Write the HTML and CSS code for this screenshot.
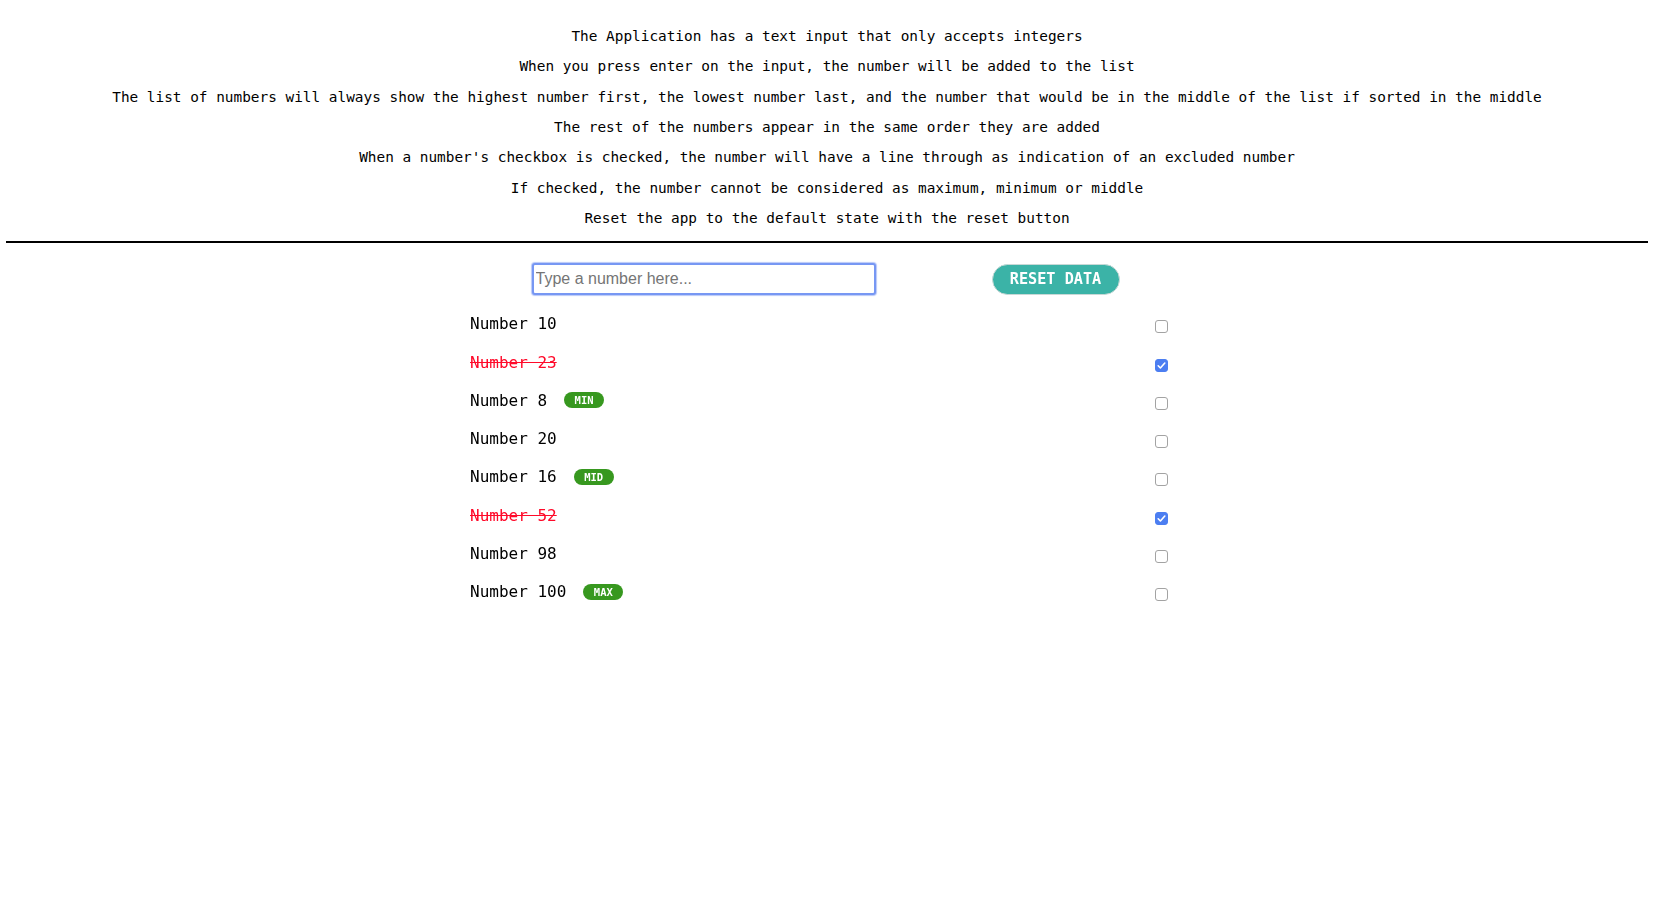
FILE: index.html
```html
<!DOCTYPE html>
<html lang="en">
<head>
<meta charset="utf-8">
<title>Numbers</title>
<link rel="stylesheet" href="styles.css">
</head>
<body>
<div class="intro">
  <p>The Application has a text input that only accepts integers</p>
  <p>When you press enter on the input, the number will be added to the list</p>
  <p>The list of numbers will always show the highest number first, the lowest number last, and the number that would be in the middle of the list if sorted in the middle</p>
  <p>The rest of the numbers appear in the same order they are added</p>
  <p>When a number's checkbox is checked, the number will have a line through as indication of an excluded number</p>
  <p>If checked, the number cannot be considered as maximum, minimum or middle</p>
  <p>Reset the app to the default state with the reset button</p>
</div>
<hr class="divider">
<div class="controls">
  <input class="num-input" type="text" placeholder="Type a number here..." autofocus>
  <button class="reset-btn" type="button">RESET DATA</button>
</div>
<ul class="list">
  <li class="row"><span class="label"><span class="num">Number 10</span></span><input class="check" type="checkbox"></li>
  <li class="row"><span class="label"><span class="num excluded">Number 23</span></span><input class="check" type="checkbox" checked></li>
  <li class="row"><span class="label"><span class="num">Number 8</span><span class="badge">MIN</span></span><input class="check" type="checkbox"></li>
  <li class="row"><span class="label"><span class="num">Number 20</span></span><input class="check" type="checkbox"></li>
  <li class="row"><span class="label"><span class="num">Number 16</span><span class="badge">MID</span></span><input class="check" type="checkbox"></li>
  <li class="row"><span class="label"><span class="num excluded">Number 52</span></span><input class="check" type="checkbox" checked></li>
  <li class="row"><span class="label"><span class="num">Number 98</span></span><input class="check" type="checkbox"></li>
  <li class="row"><span class="label"><span class="num">Number 100</span><span class="badge">MAX</span></span><input class="check" type="checkbox"></li>
</ul>
</body>
</html>
```
FILE: styles.css
```css
html, body {
  margin: 0;
  padding: 0;
  background: #fff;
}
body {
  font-family: "DejaVu Sans Mono", "Liberation Mono", monospace;
  color: #000;
}
.intro {
  padding-top: 20.8px;
}
.intro p {
  margin: 0;
  font-size: 14.4px;
  line-height: 30.4px;
  text-align: center;
}
.divider {
  margin: 7.4px 6px 0;
  border: 0;
  height: 2px;
  background: #000;
}
.controls {
  display: flex;
  justify-content: center;
  align-items: center;
  gap: 116px;
  margin-top: 20px;
  height: 32px;
}
.num-input {
  box-sizing: border-box;
  width: 344px;
  height: 32px;
  margin: 0 0 0 -3px;
  padding: 0 2px;
  border: 2px solid #7797f3;
  border-radius: 3px;
  box-shadow: 0 0 1px 1px #b8c8f8;
  font-family: "Liberation Sans", Arial, sans-serif;
  font-size: 16px;
  color: #000;
  outline: none;
  caret-color: #000;
}
.num-input::placeholder {
  color: #757575;
}
.reset-btn {
  box-sizing: border-box;
  width: 128px;
  height: 31px;
  padding: 0;
  border: 1px solid #c8d8d6;
  border-radius: 16px;
  background: #3bb3a7;
  color: #fff;
  font-family: "DejaVu Sans Mono", monospace;
  font-weight: bold;
  font-size: 15.2px;
  cursor: pointer;
}
.list {
  list-style: none;
  margin: 9.7px auto 0;
  padding: 0;
  width: 714px;
}
.row {
  display: flex;
  justify-content: space-between;
  align-items: center;
  height: 38.28px;
}
.label {
  display: flex;
  align-items: center;
  gap: 17px;
  font-size: 16px;
}
.num.excluded {
  color: #ff0a2a;
  text-decoration: line-through;
}
.badge {
  display: inline-flex;
  align-items: center;
  justify-content: center;
  width: 40px;
  height: 16px;
  border-radius: 8px;
  background: #37981f;
  color: #fff;
  font-size: 10.5px;
  font-weight: bold;
  line-height: 16px;
}
.check {
  -webkit-appearance: none;
  appearance: none;
  box-sizing: border-box;
  width: 13px;
  height: 13px;
  margin: 6px 16px 0 0;
  border: 1px solid #a3a3a3;
  border-radius: 3px;
  background: #fff;
}
.check:checked {
  border-color: #4c7ef1;
  background: #4c7ef1 url("data:image/svg+xml,%3Csvg xmlns='http://www.w3.org/2000/svg' viewBox='0 0 13 13'%3E%3Cpath d='M3.2 6.8l2.2 2.2 4.4-5' fill='none' stroke='%23fff' stroke-width='1.6' stroke-linecap='round' stroke-linejoin='round'/%3E%3C/svg%3E") center/13px 13px no-repeat;
}
```
